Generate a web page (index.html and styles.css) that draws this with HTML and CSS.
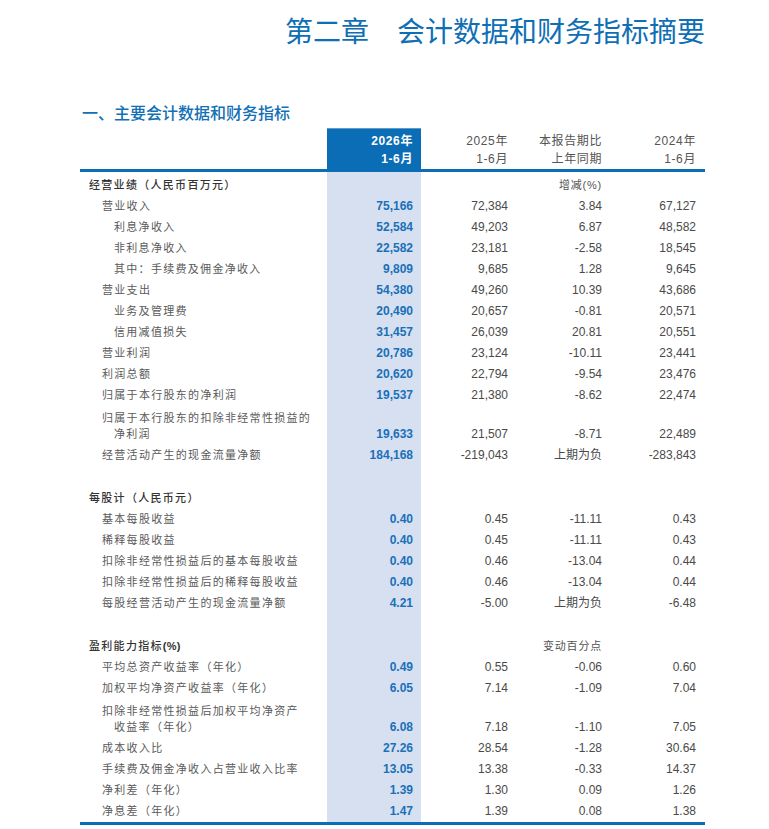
FILE: index.html
```html
<!DOCTYPE html>
<html lang="zh-CN">
<head>
<meta charset="utf-8">
<title>第二章 会计数据和财务指标摘要</title>
<link rel="stylesheet" href="styles.css">
</head>
<body>
<div class="page">
  <h1 class="chapter">第二章　会计数据和财务指标摘要</h1>
  <h2 class="section-title">一、主要会计数据和财务指标</h2>
  <table class="fin">
    <colgroup>
      <col class="w-label"><col class="w-num"><col class="w-num2"><col class="w-num2"><col class="w-num">
    </colgroup>
    <thead>
      <tr>
        <th class="lbl"></th>
        <th class="cur">2026年<br>1-6月</th>
        <th class="n">2025年<br>1-6月</th>
        <th class="n r9">本报告期比<br>上年同期</th>
        <th class="n r9">2024年<br>1-6月</th>
      </tr>
    </thead>
    <tbody>
      <tr class="sec">
        <td class="lbl l0">经营业绩（人民币百万元）</td><td class="cur"></td><td class="n"></td><td class="n r9 note">增减(%)</td><td class="n r9"></td>
      </tr>
      <tr><td class="lbl l1">营业收入</td><td class="cur">75,166</td><td class="n">72,384</td><td class="n r9">3.84</td><td class="n r9">67,127</td></tr>
      <tr><td class="lbl l2">利息净收入</td><td class="cur">52,584</td><td class="n">49,203</td><td class="n r9">6.87</td><td class="n r9">48,582</td></tr>
      <tr><td class="lbl l2">非利息净收入</td><td class="cur">22,582</td><td class="n">23,181</td><td class="n r9">-2.58</td><td class="n r9">18,545</td></tr>
      <tr><td class="lbl l2">其中：手续费及佣金净收入</td><td class="cur">9,809</td><td class="n">9,685</td><td class="n r9">1.28</td><td class="n r9">9,645</td></tr>
      <tr><td class="lbl l1">营业支出</td><td class="cur">54,380</td><td class="n">49,260</td><td class="n r9">10.39</td><td class="n r9">43,686</td></tr>
      <tr><td class="lbl l2">业务及管理费</td><td class="cur">20,490</td><td class="n">20,657</td><td class="n r9">-0.81</td><td class="n r9">20,571</td></tr>
      <tr><td class="lbl l2">信用减值损失</td><td class="cur">31,457</td><td class="n">26,039</td><td class="n r9">20.81</td><td class="n r9">20,551</td></tr>
      <tr><td class="lbl l1">营业利润</td><td class="cur">20,786</td><td class="n">23,124</td><td class="n r9">-10.11</td><td class="n r9">23,441</td></tr>
      <tr><td class="lbl l1">利润总额</td><td class="cur">20,620</td><td class="n">22,794</td><td class="n r9">-9.54</td><td class="n r9">23,476</td></tr>
      <tr><td class="lbl l1">归属于本行股东的净利润</td><td class="cur">19,537</td><td class="n">21,380</td><td class="n r9">-8.62</td><td class="n r9">22,474</td></tr>
      <tr class="two"><td class="lbl l1">归属于本行股东的扣除非经常性损益的<span class="cont">净利润</span></td><td class="cur">19,633</td><td class="n">21,507</td><td class="n r9">-8.71</td><td class="n r9">22,489</td></tr>
      <tr><td class="lbl l1">经营活动产生的现金流量净额</td><td class="cur">184,168</td><td class="n">-219,043</td><td class="n r9">上期为负</td><td class="n r9">-283,843</td></tr>
      <tr class="blank"><td class="lbl"></td><td class="cur"></td><td></td><td></td><td></td></tr>

      <tr class="sec">
        <td class="lbl l0">每股计（人民币元）</td><td class="cur"></td><td class="n"></td><td class="n r9"></td><td class="n r9"></td>
      </tr>
      <tr><td class="lbl l1">基本每股收益</td><td class="cur">0.40</td><td class="n">0.45</td><td class="n r9">-11.11</td><td class="n r9">0.43</td></tr>
      <tr><td class="lbl l1">稀释每股收益</td><td class="cur">0.40</td><td class="n">0.45</td><td class="n r9">-11.11</td><td class="n r9">0.43</td></tr>
      <tr><td class="lbl l1">扣除非经常性损益后的基本每股收益</td><td class="cur">0.40</td><td class="n">0.46</td><td class="n r9">-13.04</td><td class="n r9">0.44</td></tr>
      <tr><td class="lbl l1">扣除非经常性损益后的稀释每股收益</td><td class="cur">0.40</td><td class="n">0.46</td><td class="n r9">-13.04</td><td class="n r9">0.44</td></tr>
      <tr><td class="lbl l1">每股经营活动产生的现金流量净额</td><td class="cur">4.21</td><td class="n">-5.00</td><td class="n r9">上期为负</td><td class="n r9">-6.48</td></tr>
      <tr class="blank"><td class="lbl"></td><td class="cur"></td><td></td><td></td><td></td></tr>

      <tr class="sec">
        <td class="lbl l0">盈利能力指标<span class="pct">(%)</span></td><td class="cur"></td><td class="n"></td><td class="n r9 note">变动百分点</td><td class="n r9"></td>
      </tr>
      <tr><td class="lbl l1">平均总资产收益率（年化）</td><td class="cur">0.49</td><td class="n">0.55</td><td class="n r9">-0.06</td><td class="n r9">0.60</td></tr>
      <tr><td class="lbl l1">加权平均净资产收益率（年化）</td><td class="cur">6.05</td><td class="n">7.14</td><td class="n r9">-1.09</td><td class="n r9">7.04</td></tr>
      <tr class="two"><td class="lbl l1">扣除非经常性损益后加权平均净资产<span class="cont">收益率（年化）</span></td><td class="cur">6.08</td><td class="n">7.18</td><td class="n r9">-1.10</td><td class="n r9">7.05</td></tr>
      <tr><td class="lbl l1">成本收入比</td><td class="cur">27.26</td><td class="n">28.54</td><td class="n r9">-1.28</td><td class="n r9">30.64</td></tr>
      <tr><td class="lbl l1">手续费及佣金净收入占营业收入比率</td><td class="cur">13.05</td><td class="n">13.38</td><td class="n r9">-0.33</td><td class="n r9">14.37</td></tr>
      <tr><td class="lbl l1">净利差（年化）</td><td class="cur">1.39</td><td class="n">1.30</td><td class="n r9">0.09</td><td class="n r9">1.26</td></tr>
      <tr class="last"><td class="lbl l1">净息差（年化）</td><td class="cur">1.47</td><td class="n">1.39</td><td class="n r9">0.08</td><td class="n r9">1.38</td></tr>
    </tbody>
  </table>
</div>
</body>
</html>
```
FILE: styles.css
```css
html, body {
  margin: 0;
  padding: 0;
  background: #ffffff;
}

body {
  font-family: "Liberation Sans", "Noto Sans CJK SC", sans-serif;
  color: #555555;
}

.page {
  width: 705px;
  padding-top: 16px;
}

.chapter {
  margin: 0;
  font-family: "Noto Sans CJK SC", sans-serif;
  font-size: 28px;
  line-height: 28px;
  font-weight: 400;
  color: #0f6fb5;
  text-align: right;
}

.section-title {
  margin: 60px 0 0 82px;
  font-family: "Noto Sans CJK SC", sans-serif;
  font-size: 16px;
  line-height: 16px;
  font-weight: 500;
  color: #1270b6;
}

.fin {
  margin: 8px 0 0 80px;
  width: 625px;
  table-layout: fixed;
  border-collapse: separate;
  border-spacing: 0;
  font-size: 12px;
}

.w-label { width: 247px; }
.w-num { width: 94px; }
.w-num2 { width: 95px; }

.fin th {
  height: 36px;
  padding: 4px 8px 1px 0;
  line-height: 18px;
  font-weight: 400;
  text-align: right;
  vertical-align: top;
  color: #555555;
  border-bottom: 3px solid #0a6db5;
  letter-spacing: 0.6px;
}

.fin th.cur {
  background: #0a6db5;
  color: #ffffff;
  font-weight: 700;
  border-top: 1px solid #5a9bd0;
  padding-top: 3px;
}

.fin td {
  padding: 0 8px 0 0;
  line-height: 21px;
  height: 21px;
  text-align: right;
  vertical-align: top;
  white-space: nowrap;
  color: #4a4a4a;
}

.fin th.r9,
.fin td.r9 {
  padding-right: 9px;
}

.fin td.cur {
  background: #d6e0f1;
  color: #1a70b8;
  font-weight: 700;
}

.fin td.lbl {
  text-align: left;
  padding-right: 0;
  letter-spacing: 1.3px;
  font-size: 11px;
  color: #5a5a5a;
}

.fin td.l0 {
  padding-left: 9px;
  color: #333333;
  font-weight: 500;
  letter-spacing: 1.3px;
}

.pct {
  font-weight: 700;
  letter-spacing: 0.3px;
}

.fin td.l1 { padding-left: 22px; }
.fin td.l2 { padding-left: 34px; }

.fin td.note {
  font-size: 11px;
  letter-spacing: 0.8px;
  color: #555555;
}

.fin tr.sec td {
  padding-top: 3px;
}

.fin tr.blank td {
  height: 19px;
  line-height: 19px;
}

.fin tr.two td {
  line-height: 16px;
  height: 32px;
  padding-top: 3.5px;
  padding-bottom: 3.5px;
  vertical-align: bottom;
}

.fin tr.two td.lbl {
  vertical-align: top;
  white-space: normal;
}

.cont {
  display: block;
  padding-left: 12px;
}

.fin tr.last td {
  border-bottom: 3px solid #0a6db5;
}
```
